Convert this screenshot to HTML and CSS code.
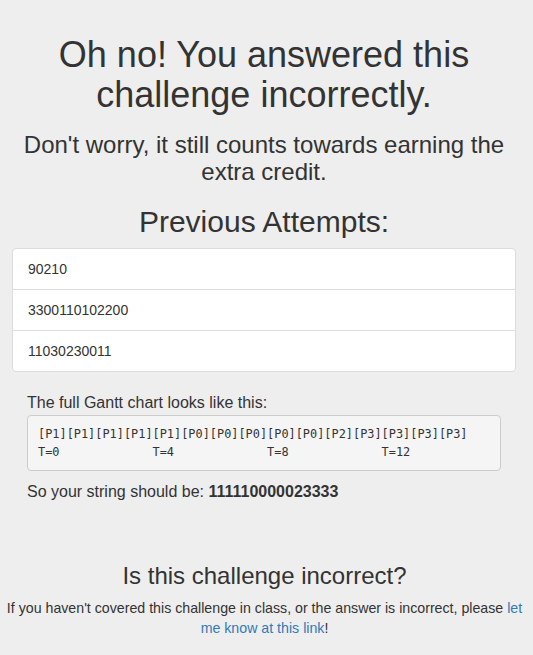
FILE: index.html
```html
<!DOCTYPE html>
<html>
<head>
<meta charset="utf-8">
<link rel="stylesheet" href="styles.css">
</head>
<body>
<div class="container">
  <h1 class="title">Oh no! You answered this challenge incorrectly.</h1>
  <h3 class="subtitle">Don't worry, it still counts towards earning the extra credit.</h3>
  <h2 class="attempts-title">Previous Attempts:</h2>
  <ul class="list-group">
    <li class="list-item">90210</li>
    <li class="list-item">3300110102200</li>
    <li class="list-item">11030230011</li>
  </ul>
  <div class="gantt">
    <p class="gantt-label">The full Gantt chart looks like this:</p>
<pre class="chart">[P1][P1][P1][P1][P1][P0][P0][P0][P0][P0][P2][P3][P3][P3][P3]
T=0             T=4             T=8             T=12</pre>
    <p class="answer">So your string should be: <strong>111110000023333</strong></p>
  </div>
</div>
<div class="footer">
  <h3 class="footer-title">Is this challenge incorrect?</h3>
  <p class="footer-text">If you haven't covered this challenge in class, or the answer is incorrect, please <a href="#" class="link">let me know at this link</a>!</p>
</div>
</body>
</html>
```
FILE: styles.css
```css
* { box-sizing: border-box; }
html, body { margin: 0; padding: 0; }
body {
  background: #eeeeee;
  color: #333333;
  font-family: "Liberation Sans", Arial, sans-serif;
  font-size: 14px;
  line-height: 1.42857;
}
.container {
  padding: 35px 17px 0 12px;
}
.title {
  margin: 0;
  font-size: 36px;
  line-height: 1.1;
  font-weight: normal;
  text-align: center;
}
.subtitle {
  margin: 18px 0 0;
  font-size: 24px;
  line-height: 1.1;
  font-weight: normal;
  text-align: center;
}
.attempts-title {
  margin: 20px 0 0;
  font-size: 30px;
  line-height: 1.1;
  font-weight: normal;
  text-align: center;
}
.list-group {
  list-style: none;
  margin: 10px 0 20px;
  padding: 0;
  background: #ffffff;
  border: 1px solid #dddddd;
  border-radius: 4px;
}
.list-item {
  padding: 10px 15px;
  line-height: 20px;
  height: 40px;
}
.list-item + .list-item {
  border-top: 1px solid #dddddd;
  height: 41px;
}
.gantt {
  padding: 0 15px;
}
.gantt-label {
  margin: 0;
  font-size: 16px;
}
.chart {
  margin: 0 0 10px;
  padding: 9px 10px;
  font-family: "DejaVu Sans Mono", "Liberation Mono", monospace;
  font-size: 11.9px;
  line-height: 18px;
  color: #333333;
  background: #f5f5f5;
  border: 1px solid #cccccc;
  border-radius: 4px;
}
.answer {
  margin: 0;
  font-size: 16px;
}
.footer {
  margin-top: 59px;
  padding: 0 4px 0 0;
  text-align: center;
}
.footer-title {
  margin: 0 0 9px;
  font-size: 24px;
  line-height: 1.1;
  font-weight: normal;
}
.footer-text {
  margin: 0;
  font-size: 14.2px;
  line-height: 20px;
}
.link {
  color: #337ab7;
  text-decoration: none;
}
```
